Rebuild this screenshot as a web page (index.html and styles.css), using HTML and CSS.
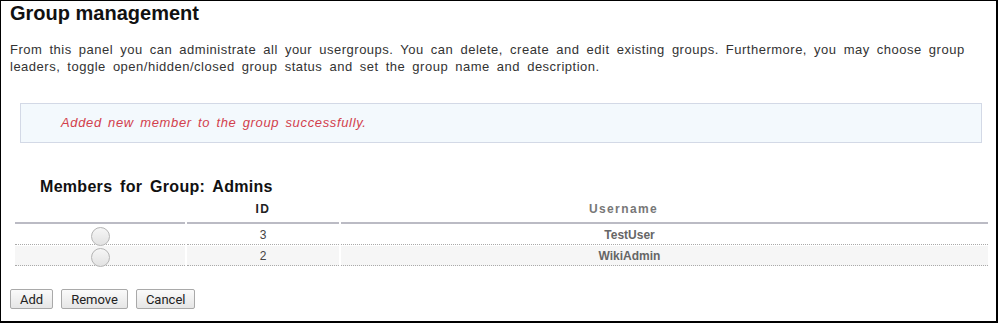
FILE: index.html
```html
<!DOCTYPE html>
<html lang="en">
<head>
  <meta charset="UTF-8">
  <title>Group management</title>
  <link rel="stylesheet" href="styles.css">
</head>
<body>
  <div class="panel">
    <h2 class="title">Group management</h2>
    <p class="intro">From this panel you can administrate all your usergroups. You can delete, create and edit existing groups. Furthermore, you may choose group leaders, toggle open/hidden/closed group status and set the group name and description.</p>

    <div class="notice">Added new member to the group successfully.</div>

    <h3 class="members-title">Members for Group: Admins</h3>
    <table class="members">
      <thead>
        <tr>
          <th class="col-pick"></th>
          <th class="col-id">ID</th>
          <th class="col-name">Username</th>
        </tr>
      </thead>
      <tbody>
        <tr>
          <td><span class="radio"></span></td>
          <td class="id">3</td>
          <td class="name">TestUser</td>
        </tr>
        <tr class="alt">
          <td><span class="radio"></span></td>
          <td class="id">2</td>
          <td class="name">WikiAdmin</td>
        </tr>
      </tbody>
    </table>

    <div class="actions">
      <button class="btn">Add</button>
      <button class="btn">Remove</button>
      <button class="btn">Cancel</button>
    </div>
  </div>
</body>
</html>
```

FILE: styles.css
```css
html,
body {
  margin: 0;
  background: #fff;
}
body {
  font-family: "Liberation Sans", Arial, sans-serif;
  color: #333;
}

.panel {
  box-sizing: border-box;
  width: 998px;
  height: 323px;
  border: 1px solid #000;
  border-right-width: 2px;
  border-bottom-width: 2px;
  padding: 0 9px;
}

.title {
  margin: 0;
  font-size: 20px;
  line-height: 24px;
  color: #111;
}

.intro {
  margin: 16px 0 0;
  font-size: 13px;
  line-height: 17px;
  word-spacing: 3px;
  letter-spacing: 0.5px;
}

.notice {
  margin: 28px 5px 0 10px;
  height: 38px;
  line-height: 38px;
  padding-left: 40px;
  border: 1px solid #d3d9e6;
  background: #f3f9fd;
  color: #d2404c;
  font-size: 13px;
  font-style: italic;
  letter-spacing: 0.65px;
  word-spacing: 2px;
}

.members-title {
  margin: 34px 0 0 30px;
  font-size: 16px;
  line-height: 20px;
  color: #111;
  word-spacing: 3px;
  letter-spacing: 0.3px;
}

.members {
  margin: 2px 0 0 3px;
  width: 977px;
  border-collapse: separate;
  border-spacing: 2px 1px;
  font-size: 12px;
}
.members th {
  height: 18px;
  padding: 0 0 4px;
  border-bottom: 2px solid #bbbbc4;
  font-weight: bold;
  letter-spacing: 1.4px;
}
.col-pick { width: 170px; }
.col-id { width: 152px; color: #222; }
.members th.col-name {
  padding-right: 82px;
  color: #777;
}

.members td {
  height: 19px;
  padding: 0;
  text-align: center;
  border-bottom: 1px dotted #aaa;
}
.members tr.alt td {
  background: #f6f6f6;
}
.members td.id {
  color: #444;
}
.members td.name {
  padding-right: 70px;
  font-weight: bold;
  color: #666;
}

.radio {
  display: inline-block;
  box-sizing: border-box;
  width: 19px;
  height: 19px;
  margin-bottom: -7px;
  border: 1px solid #b4b4b4;
  border-radius: 50%;
  background: linear-gradient(#f6f6f6, #e2e2e2);
}

.actions {
  display: flex;
  gap: 8px;
  margin-top: 22px;
}
.btn {
  height: 20px;
  padding: 0 9px;
  border: 1px solid #a9a9a9;
  border-radius: 2px;
  background: linear-gradient(#fafafa, #e6e6e6);
  font-family: Roboto, "Noto Sans", sans-serif;
  font-size: 13px;
  color: #222;
}
```
